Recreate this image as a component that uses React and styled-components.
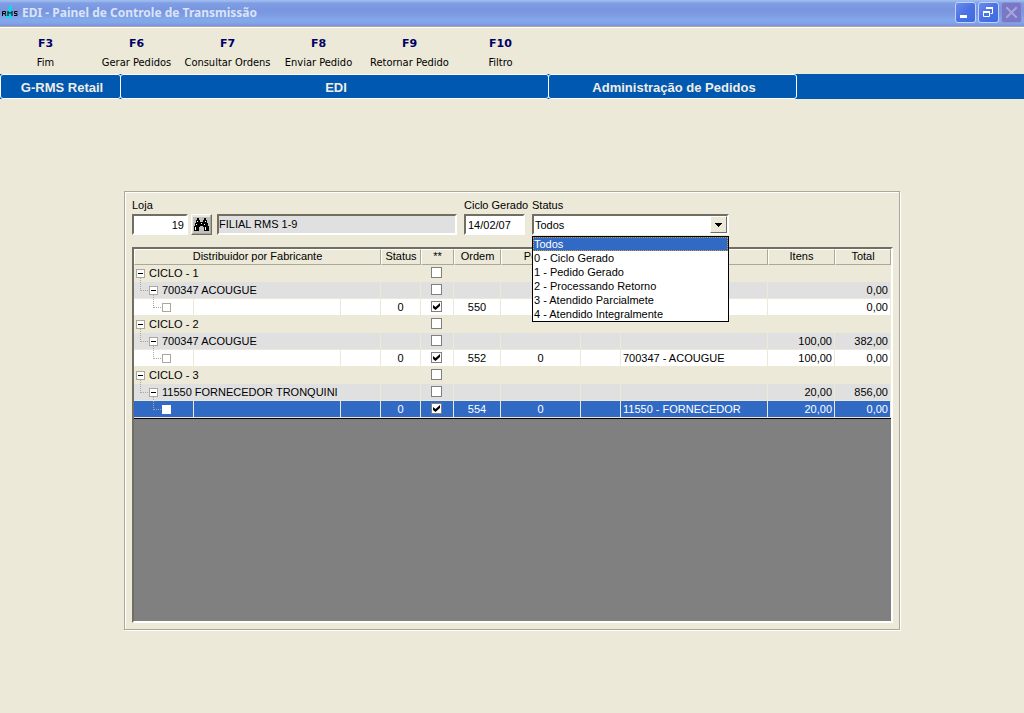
import { useState } from 'react'
import styled, { createGlobalStyle } from 'styled-components'

const colour = {
  face: '#ece9d8',
  shadow: '#aca899',
  darkShadow: '#716f64',
  group: '#e0e0e0',
  selected: '#316ac5',
  bar: '#0058b0',
  key: '#000066'
}

const actions = [
  { key: 'F3', label: 'Fim' },
  { key: 'F6', label: 'Gerar Pedidos' },
  { key: 'F7', label: 'Consultar Ordens' },
  { key: 'F8', label: 'Enviar Pedido' },
  { key: 'F9', label: 'Retornar Pedido' },
  { key: 'F10', label: 'Filtro' }
]

const statusOptions = [
  'Todos',
  '0 - Ciclo Gerado',
  '1 - Pedido Gerado',
  '2 - Processando Retorno',
  '3 - Atendido Parcialmete',
  '4 - Atendido Integralmente'
]

const columns = [60, 147, 40, 40, 33, 47, 80, 40, 147, 67, 56]

const rows = [
  { level: 0, name: 'CICLO - 1' },
  { level: 1, name: '700347 ACOUGUE', total: '0,00' },
  { level: 2, status: '0', order: '550', checked: true, total: '0,00' },
  { level: 0, name: 'CICLO - 2' },
  { level: 1, name: '700347 ACOUGUE', items: '100,00', total: '382,00' },
  {
    level: 2,
    status: '0',
    order: '552',
    checked: true,
    request: '0',
    supplier: '700347 - ACOUGUE',
    items: '100,00',
    total: '0,00'
  },
  { level: 0, name: 'CICLO - 3' },
  {
    level: 1,
    name: '11550 FORNECEDOR TRONQUINI',
    items: '20,00',
    total: '856,00'
  },
  {
    level: 2,
    status: '0',
    order: '554',
    checked: true,
    request: '0',
    supplier: '11550 - FORNECEDOR',
    items: '20,00',
    total: '0,00',
    selected: true
  }
]

function Logo() {
  return (
    <svg width='16' height='16' viewBox='0 0 16 16' aria-hidden='true'>
      <path
        d='M8 1h2v3h-1v3h1v6h-2v-3h-1v3h-3v-2h1v-4h1v-3h1v-2h1z'
        fill='#00e0e8'
      />
      <path
        d='M0.500 11v-4.500h3v2h-3M2.500 8.500l1.500 2.500M6 11v-4.500l2 2 2-2v4.500M15.500 6.500h-3v2h2.500v2h-3'
        fill='none'
        stroke='#000'
      />
    </svg>
  )
}

function Binoculars() {
  return (
    <svg width='17' height='16' viewBox='0 0 17 16' aria-hidden='true'>
      <path d='M0 0h17v16h-17z' fill='#c0c0c0' />
      <path
        d='M4 1h2v2h1v2h3v-2h1v-2h2v2h1v3h1v3h1v5h-5v-4h-1v-1h-3v1h-1v4h-5v-5h1v-3h1v-3h1z'
        fill='#000'
      />
      <path
        d='M4 4h1v1h-1zM12 4h1v1h-1zM3 7h1v1h-1zM11 7h1v1h-1zM2 10h1v3h-1zM12 10h1v3h-1zM8 6h1v1h-1z'
        fill='#fff'
      />
    </svg>
  )
}

function TreeNode({ level, selected }) {
  const x = 2 + level * 13
  return (
    <svg width={x + 9} height='17' aria-hidden='true'>
      {level > 0 && (
        <path
          d={`M${x - 8.5} 0v9M${x - 8} 8.500h8`}
          stroke={colour.shadow}
          strokeDasharray='1 1'
          fill='none'
        />
      )}
      {level < 2 && (
        <path
          d={`M${x + 4.5} 13v4`}
          stroke={colour.shadow}
          strokeDasharray='1 1'
        />
      )}
      <rect
        x={x + 0.5}
        y='4.500'
        width='8'
        height='8'
        fill='#fff'
        stroke={selected ? '#fff' : colour.shadow}
      />
      {level < 2 && <path d={`M${x + 2} 8.500h5`} stroke='#000' />}
    </svg>
  )
}

function OrderRow({ row }) {
  const [checked, setChecked] = useState(Boolean(row.checked))
  const isLeaf = row.level === 2

  return (
    <Row $level={row.level} $selected={row.selected}>
      <TreeCell colSpan={isLeaf ? 1 : 3}>
        <Node>
          <TreeNode level={row.level} selected={row.selected} />
          {row.name}
        </Node>
      </TreeCell>
      {isLeaf && (
        <>
          <Cell />
          <Cell />
        </>
      )}
      <Cell $align='center'>{row.status}</Cell>
      <CheckCell>
        <Check
          type='checkbox'
          aria-label='Selecionar'
          checked={checked}
          onChange={() => setChecked(!checked)}
        />
      </CheckCell>
      <Cell $align='center'>{row.order}</Cell>
      <Cell $align='center'>{row.request}</Cell>
      <Cell />
      <Cell>{row.supplier}</Cell>
      {row.items && <Cell $align='right'>{row.items}</Cell>}
      <Cell $align='right' colSpan={row.items ? 1 : 2}>
        {row.total}
      </Cell>
    </Row>
  )
}

export default function App() {
  const [status, setStatus] = useState('Todos')

  return (
    <Page>
      <GlobalStyle />
      <TitleBar>
        <Logo />
        <Title>EDI - Painel de Controle de Transmissão</Title>
        <WindowButton aria-label='Minimizar'>
          <svg width='19' height='19'>
            <path d='M4 12h7v3h-7z' fill='#fff' />
          </svg>
        </WindowButton>
        <WindowButton aria-label='Restaurar'>
          <svg width='19' height='19' fill='none' stroke='#fff'>
            <path d='M7 5h7M4 9h7' strokeWidth='2' />
            <path d='M13.500 4v6.500h-2M4.500 8v5.500h6v-5.500' />
          </svg>
        </WindowButton>
        <WindowButton aria-label='Fechar' $disabled disabled>
          <svg width='19' height='19'>
            <path
              d='M5 5l9 9M14 5l-9 9'
              stroke='#a9a5dc'
              strokeWidth='2'
              strokeLinecap='square'
            />
          </svg>
        </WindowButton>
      </TitleBar>

      <Toolbar>
        {actions.map(action => (
          <Action key={action.key}>
            <Key>{action.key}</Key>
            {action.label}
          </Action>
        ))}
      </Toolbar>

      <Heading>
        <HeadingBox $width='121px'>G-RMS Retail</HeadingBox>
        <HeadingBox $width='429px'>EDI</HeadingBox>
        <HeadingBox $width='249px'>Administração de Pedidos</HeadingBox>
      </Heading>

      <Main>
        <Panel>
          <Filters>
            <Field $width='56px'>
              <Label htmlFor='store'>Loja</Label>
              <Input id='store' defaultValue='19' $align='right' />
            </Field>
            <SearchButton type='button' aria-label='Procurar loja'>
              <Binoculars />
            </SearchButton>
            <Field $width='240px'>
              <Input
                aria-label='Nome da loja'
                value='FILIAL RMS 1-9'
                readOnly
              />
            </Field>
            <Field $width='61px'>
              <Label htmlFor='cycle'>Ciclo Gerado</Label>
              <Input id='cycle' defaultValue='14/02/07' />
            </Field>
            <Field $width='197px'>
              <Label htmlFor='status'>Status</Label>
              <Select
                id='status'
                value={status}
                onChange={event => setStatus(event.target.value)}
              >
                {statusOptions.map(option => (
                  <option key={option}>{option}</option>
                ))}
              </Select>
              <Arrow>
                <svg width='7' height='4' aria-hidden='true'>
                  <path d='M0 0h7v1h-1v1h-1v1h-1v1h-1v-1h-1v-1h-1v-1h-1z' />
                </svg>
              </Arrow>
              <Options>
                {statusOptions.map(option => (
                  <Option
                    key={option}
                    $active={option === status}
                    onClick={() => setStatus(option)}
                  >
                    {option}
                  </Option>
                ))}
              </Options>
            </Field>
          </Filters>

          <GridBox>
            <Table>
              <colgroup>
                {columns.map((width, index) => (
                  <col key={index} width={width} />
                ))}
              </colgroup>
              <thead>
                <tr>
                  <HeadCell colSpan={3}>Distribuidor por Fabricante</HeadCell>
                  <HeadCell>Status</HeadCell>
                  <HeadCell>**</HeadCell>
                  <HeadCell>Ordem</HeadCell>
                  <HeadCell>Pedido</HeadCell>
                  <HeadCell />
                  <HeadCell />
                  <HeadCell>Itens</HeadCell>
                  <HeadCell>Total</HeadCell>
                </tr>
              </thead>
              <tbody>
                {rows.map((row, index) => (
                  <OrderRow key={index} row={row} />
                ))}
              </tbody>
            </Table>
          </GridBox>
        </Panel>
      </Main>
    </Page>
  )
}

const GlobalStyle = createGlobalStyle`
  * {
    box-sizing: border-box;
  }

  body {
    margin: 0;
    background: ${colour.face};
    color: #000;
    font-family: 'Liberation Sans', Arial, sans-serif;
    font-size: 11px;
  }

  button,
  input,
  select {
    margin: 0;
    border-radius: 0;
    color: inherit;
    font: inherit;
  }

  svg {
    display: block;
    flex: none;
  }
`

const Page = styled.div`
  display: flex;
  flex-direction: column;
  min-height: 100vh;
`

const TitleBar = styled.header`
  display: flex;
  align-items: center;
  gap: 2px;
  height: 27px;
  padding: 0 2px 1px;
  border-bottom: 1px solid ${colour.shadow};
  background: linear-gradient(
    #9db9ee 0,
    #9db9ee 1px,
    #7e9fe4 3px,
    #7b96e0 9px,
    #7b98e1 13px,
    #84a9ea 20px,
    #82a4e8 23px,
    #7a90de 26px
  );
`

const Title = styled.h1`
  flex: 1;
  margin: 0;
  padding-left: 2px;
  color: #d8e4f8;
  font-family: 'Noto Sans', 'Open Sans', sans-serif;
  font-size: 12px;
  font-weight: bold;
  line-height: 22px;
`

const WindowButton = styled.button`
  width: 21px;
  height: 21px;
  padding: 0;
  border: 1px solid ${props => (props.$disabled ? '#8c93dc' : '#c2d2f8')};
  border-radius: 3px;
  background: ${props =>
    props.$disabled
      ? '#7878c4'
      : 'linear-gradient(135deg, #6c8cec, #4a72e4 50%, #3c6ce0)'};
`

const Toolbar = styled.nav`
  display: flex;
  height: 47px;
  border-top: 1px solid #fff;
`

const Action = styled.button`
  display: flex;
  flex-direction: column;
  align-items: center;
  gap: 4px;
  width: 91px;
  padding: 8px 0 0;
  border: 0;
  background: none;
  font-family: 'DejaVu Sans Condensed', 'DejaVu Sans', sans-serif;
  font-size: 11px;
  line-height: 15px;
  white-space: nowrap;
`

const Key = styled.strong`
  color: ${colour.key};
  font-family: 'DejaVu Sans', sans-serif;
`

const Heading = styled.div`
  display: flex;
  height: 25px;
  background: ${colour.bar};
`

const HeadingBox = styled.h2`
  width: ${props => props.$width};
  margin: 0;
  padding-left: 3px;
  border: 1px solid #fff;
  border-radius: 3px;
  color: #f0eee4;
  font-size: 13px;
  line-height: 25px;
  text-align: center;
  white-space: nowrap;

  & + & {
    margin-left: -1px;
  }
`

const Main = styled.main`
  display: flex;
  flex: 1;
  padding: 92px 124px 83px;
`

const Panel = styled.section`
  display: flex;
  flex: 1;
  flex-direction: column;
  gap: 12px;
  min-width: 0;
  padding: 6px 6px 6px 7px;
  border: 1px solid ${colour.shadow};
  box-shadow:
    inset 1px 1px #fff,
    1px 1px #fff;
`

const Filters = styled.form`
  display: flex;
  align-items: flex-end;
`

const Field = styled.div`
  position: relative;
  width: ${props => props.$width};

  & + & {
    margin-left: 7px;
  }

  button + & {
    margin-left: 5px;
  }
`

const Label = styled.label`
  display: block;
  height: 16px;
  line-height: 14px;
  white-space: nowrap;
`

const sunken = `
  border: 2px solid;
  border-color: #716f64 #fff #fff #716f64;
`

const Input = styled.input`
  display: block;
  width: 100%;
  height: 21px;
  padding: ${props => (props.readOnly ? '0 0 2px' : '0 2px')};
  ${sunken}
  background: ${props => (props.readOnly ? colour.group : '#fff')};
  text-align: ${props => props.$align};
`

const Select = styled.select`
  display: block;
  width: 100%;
  height: 21px;
  padding: 0 20px 0 1px;
  ${sunken}
  background: #fff;
  appearance: none;
`

const Arrow = styled.span`
  position: absolute;
  right: 2px;
  bottom: 2px;
  display: grid;
  width: 17px;
  height: 17px;
  place-items: center;
  border: 1px solid;
  border-color: #fff ${colour.darkShadow} ${colour.darkShadow} #fff;
  background: ${colour.face};
  pointer-events: none;
`

const SearchButton = styled.button`
  width: 21px;
  height: 21px;
  margin-left: 3px;
  padding: 1px;
  border: 1px solid;
  border-color: #fff ${colour.darkShadow} ${colour.darkShadow} #fff;
  background: ${colour.face};
  box-shadow: inset -1px -1px ${colour.shadow};
`

const Options = styled.ul`
  position: absolute;
  top: 100%;
  right: 0;
  left: 0;
  z-index: 1;
  margin: 1px 0 0;
  padding: 0;
  border: 1px solid #000;
  background: #fff;
  list-style: none;
`

const Option = styled.li`
  height: 14px;
  padding-left: 1px;
  background: ${props => (props.$active ? colour.selected : '#fff')};
  color: ${props => (props.$active ? '#fff' : '#000')};
  line-height: 14px;
  outline: ${props => (props.$active ? '1px dotted #ce953a' : 'none')};
  outline-offset: -1px;
`

const GridBox = styled.div`
  flex: 1;
  border: 2px solid;
  border-color: ${colour.darkShadow} #fff #fff ${colour.darkShadow};
  background: #808080;
`

const Table = styled.table`
  width: 100%;
  border-bottom: 1px solid #000;
  border-spacing: 0;
  table-layout: fixed;
`

const HeadCell = styled.th`
  height: 16px;
  padding: 0;
  border: 1px solid;
  border-color: #fff ${colour.shadow} ${colour.shadow} #fff;
  background: ${colour.face};
  font-weight: normal;
  line-height: 12px;
  vertical-align: top;
`

const rowColours = [colour.face, colour.group, '#fff']

const Row = styled.tr`
  background: ${props =>
    props.$selected ? colour.selected : rowColours[props.$level]};
  color: ${props => (props.$selected ? '#fff' : '#000')};
`

const Cell = styled.td`
  height: 17px;
  padding: 0 2px;
  border-right: 1px solid ${colour.face};
  border-bottom: 1px solid ${colour.face};
  line-height: 16px;
  text-align: ${props => props.$align};
  white-space: nowrap;
`

const TreeCell = styled(Cell)`
  padding: 0;
`

const CheckCell = styled(Cell)`
  padding: 2px 10px 0;
  vertical-align: top;
`

const Node = styled.div`
  display: flex;
  gap: 4px;
  height: 16px;
`

const Check = styled.input`
  display: block;
  width: 11px;
  height: 11px;
  margin: 0;
  border: 1px solid #808080;
  background: #fff;
  appearance: none;

  &:checked::after {
    content: '';
    display: block;
    width: 7px;
    height: 7px;
    margin: 1px;
    background: #000;
    clip-path: polygon(0 28%, 36% 57%, 100% 0, 100% 43%, 36% 100%, 0 72%);
  }
`
